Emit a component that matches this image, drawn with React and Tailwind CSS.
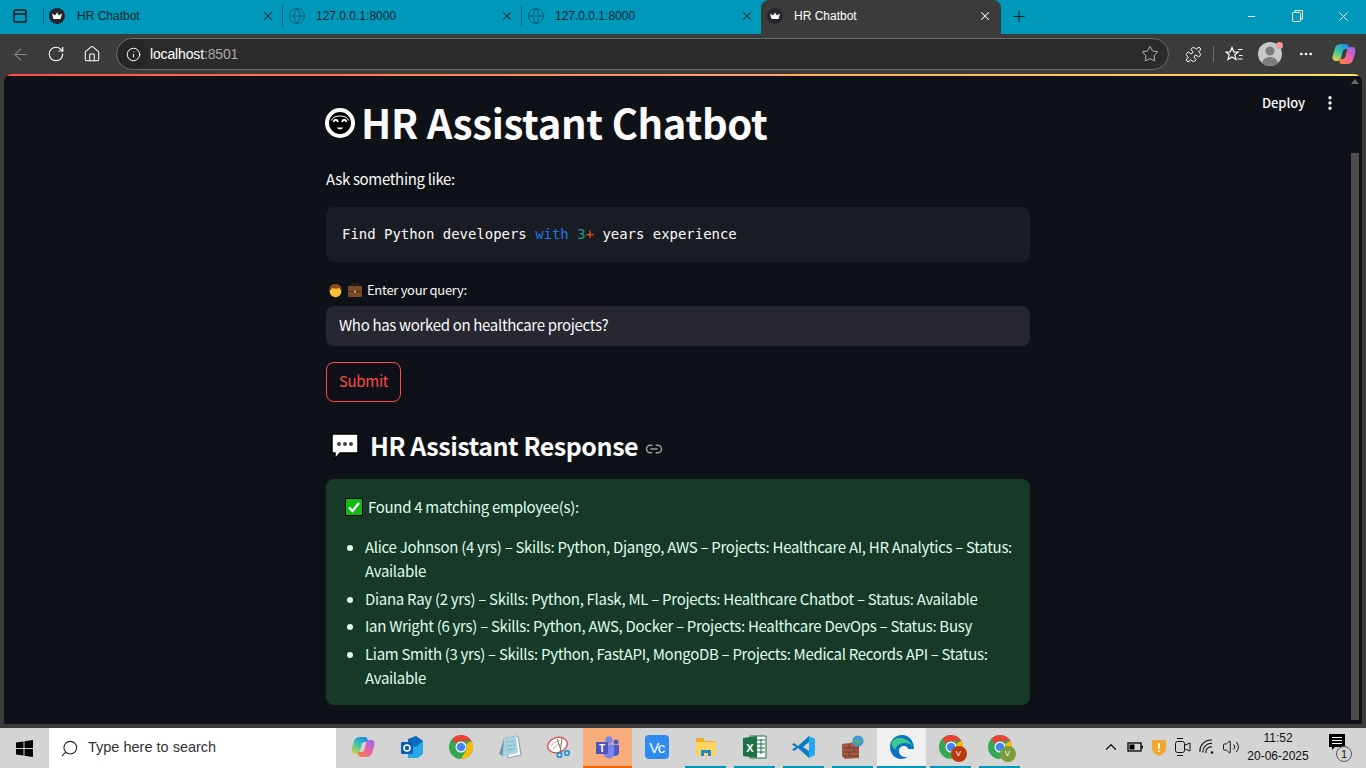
import React from "react";
import {
  ArrowLeft, RotateCw, Home, Info, Star, Puzzle, MoreHorizontal, MoreVertical, Plus, X, Minus,
  PanelTop, Globe, Search, ChevronUp, Link2, Volume2,
} from "lucide-react";

const SANS = "font-['Noto_Sans_CJK_SC','Source_Sans_Pro',sans-serif]";

// ── Small drawn icons ────────────────────────────────────────────────────────
function CrownFavicon() {
  return (
    <svg width="16" height="16" viewBox="0 0 16 16" className="shrink-0">
      <circle cx="8" cy="8" r="8" fill="#24262f" />
      <path d="M3 5.500 6 7.500 8 4.500 10 7.500 13 5.500 11.500 11h-7Z" fill="#fff" />
    </svg>
  );
}

function SmileEmoji() {
  return (
    <svg width="30" height="30" viewBox="0 0 30 30" className="shrink-0">
      <circle cx="15" cy="15" r="15" fill="#fff" />
      <circle cx="15" cy="15" r="11" fill="#000" />
      <path d="M6.500 12.500c1-6 16-6 17 0" fill="none" stroke="#fff" strokeWidth="1" />
      <path d="M8.500 14c.8-3 3.700-3 4.500 0M17 14c.8-3 3.700-3 4.500 0" stroke="#fff" strokeWidth="1.800" fill="none" />
      <path d="M12 19.500h6c-.5 2.500-5.500 2.500-6 0Z" fill="#fff" />
    </svg>
  );
}

function BoyEmoji() {
  return (
    <svg width="15" height="15" viewBox="0 0 15 15" className="shrink-0">
      <circle cx="7.500" cy="8.500" r="5.800" fill="#fbbf3c" />
      <path d="M1.500 8.500C.5 3 4 1 7.500 1s7 2 6 7.500c-1-2-2-3.500-3-3.500-2 1-4 1-6 0-1 1-2 2-3 3.500Z" fill="#8a4b1f" />
    </svg>
  );
}

function BriefcaseEmoji() {
  return (
    <svg width="16" height="15" viewBox="0 0 16 15" className="shrink-0">
      <rect x="5" y="1" width="6" height="3" fill="none" stroke="#3a2a1c" strokeWidth="1.200" />
      <rect x="1" y="3" width="14" height="11" rx="1" fill="#7b4a28" />
      <rect x="1" y="8" width="14" height="1" fill="#4d2e18" />
      <rect x="7" y="7.500" width="2" height="2" fill="#e5b23a" />
    </svg>
  );
}

function SpeechEmoji() {
  return (
    <svg width="30" height="28" viewBox="0 0 30 28" className="shrink-0">
      <path d="M2 1h26v19H10l-5 6v-6H2Z" fill="#fff" stroke="#000" strokeWidth="1.500" />
      <circle cx="9" cy="11" r="2" fill="#444" />
      <circle cx="15" cy="11" r="2" fill="#444" />
      <circle cx="21" cy="11" r="2" fill="#444" />
    </svg>
  );
}

function CheckEmoji() {
  return (
    <svg width="18" height="18" viewBox="0 0 18 18" className="shrink-0">
      <rect x="0.500" y="0.500" width="17" height="17" fill="#13b913" stroke="#000" />
      <path d="M4 9.500 7.500 13 14 5" stroke="#fff" strokeWidth="2.200" fill="none" />
    </svg>
  );
}

function CopilotIcon({ size = 24 }) {
  return (
    <svg width={size} height={size} viewBox="0 0 24 24">
      <defs>
        <linearGradient id="cpA" x1="0.700" y1="0" x2="0.100" y2="1">
          <stop offset="0" stopColor="#1f8fe8" />
          <stop offset="0.500" stopColor="#3fc9a0" />
          <stop offset="1" stopColor="#e6d23c" />
        </linearGradient>
        <linearGradient id="cpB" x1="0.900" y1="0" x2="0.200" y2="1">
          <stop offset="0" stopColor="#8f6be8" />
          <stop offset="0.500" stopColor="#e85fb0" />
          <stop offset="1" stopColor="#f5813c" />
        </linearGradient>
      </defs>
      <path d="M9 2h5c1 0 2 .5 2.500 2l1 3H14c-2 0-3 1-3.500 3L9 16c-.5 2-2 3-4 3H4c-2.500 0-4-2-3.500-4.500L3 6c.7-2.500 3-4 6-4Z" fill="url(#cpA)" />
      <path d="M15 22h-5c-1 0-2-.5-2.500-2l-1-3H10c2 0 3-1 3.500-3L15 8c.5-2 2-3 4-3h1c2.500 0 4 2 3.500 4.500L21 18c-.7 2.500-3 4-6 4Z" fill="url(#cpB)" />
    </svg>
  );
}

function ChromeIcon({ badge, badgeColor }) {
  return (
    <span className="relative flex h-6 w-6 items-center justify-center">
      <svg width="24" height="24" viewBox="0 0 24 24">
        <circle cx="12" cy="12" r="12" fill="#34a853" />
        <path d="M12 0a12 12 0 0 1 10.400 6H12a6 6 0 0 0-5.200 3L3.500 3.800A12 12 0 0 1 12 0Z" fill="#ea4335" />
        <path d="M22.400 6A12 12 0 0 1 12 24l5.200-9a6 6 0 0 0 0-6Z" fill="#fbbc05" />
        <circle cx="12" cy="12" r="5.500" fill="#fff" />
        <circle cx="12" cy="12" r="4.300" fill="#4285f4" />
      </svg>
      {badge && (
        <span
          className={`absolute -bottom-[3px] -right-[4px] flex h-[16px] w-[16px] items-center justify-center rounded-full text-[8px] text-white ${badgeColor}`}
        >
          {badge}
        </span>
      )}
    </span>
  );
}

// ── Browser chrome ───────────────────────────────────────────────────────────
function Tab({ favicon, title, last }) {
  return (
    <div
      className={`flex h-full w-[239px] shrink-0 items-center pl-[5px] pr-[7px] ${last ? "" : "border-r border-[#0b5f74]"}`}
    >
      <span className="flex w-[28px] items-center">{favicon}</span>
      <span className="flex-1 text-xs text-[#10242c]">{title}</span>
      <X size={14} strokeWidth={1.8} className="text-[#10242c]" />
    </div>
  );
}

function TabStrip() {
  const globe = <Globe size={18} strokeWidth={1.2} className="text-[#0a5a70]" />;
  return (
    <div className="flex h-[34px] shrink-0 items-center bg-[#0099bc] font-['Liberation_Sans',sans-serif]">
      <div className="mb-[2px] flex w-[44px] justify-center border-r border-[#0b5f74] pr-[4px]">
        <PanelTop size={16} strokeWidth={2} className="text-[#06141a]" />
      </div>
      <div className="mb-[2px] flex h-[22px] items-center">
        <Tab favicon={<CrownFavicon />} title="HR Chatbot" />
        <Tab favicon={globe} title="127.0.0.1:8000" />
        <Tab favicon={globe} title="127.0.0.1:8000" last />
      </div>
      <div className="flex h-[34px] w-[240px] shrink-0 items-center self-end rounded-t-lg bg-[#3b3b3b] pb-[2px] pl-[6px] pr-[9px]">
        <span className="flex w-[27px] items-center"><CrownFavicon /></span>
        <span className="flex-1 text-xs text-white">HR Chatbot</span>
        <X size={14} strokeWidth={1.8} className="text-white" />
      </div>
      <div className="mb-[2px] ml-[9px] flex w-[18px] justify-center">
        <Plus size={19} strokeWidth={1.3} className="text-[#06141a]" />
      </div>
      <div className="mb-[2px] ml-auto flex items-center text-white">
        <div className="flex w-[46px] justify-center"><Minus size={11} /></div>
        <div className="flex w-[46px] justify-center">
          <svg width="11" height="12" viewBox="0 0 11 12" fill="none" stroke="#fff">
            <rect x="0.500" y="2.500" width="8" height="9" rx="1" />
            <path d="M3 2.500V.5h7.500v8.500H8.500" />
          </svg>
        </div>
        <div className="flex w-[46px] justify-center"><X size={15} strokeWidth={1.4} /></div>
      </div>
    </div>
  );
}

function AddressBar() {
  return (
    <div className="flex h-[40px] shrink-0 items-center bg-[#3b3b3b] font-['Liberation_Sans',sans-serif]">
      <div className="flex w-[38px] justify-center pl-[3px]">
        <ArrowLeft size={19} strokeWidth={1.3} className="text-[#8d8d8d]" />
      </div>
      <div className="flex w-[36px] justify-center">
        <RotateCw size={18} strokeWidth={1.5} className="text-white" />
      </div>
      <div className="flex w-[36px] justify-center pr-[1px]">
        <Home size={18} strokeWidth={1.4} className="text-white" />
      </div>
      <div className="ml-[6px] flex h-[32px] w-[1053px] items-center rounded-full border border-[#6b6b6b] bg-[#2b2b2b]">
        <div className="ml-[1px] flex h-[30px] w-[30px] items-center justify-center rounded-full bg-[#262626]">
          <Info size={15} strokeWidth={1.6} className="text-white" />
        </div>
        <span className="ml-[2px] text-sm tracking-[-0.15px] text-white">
          localhost<span className="text-[#a8a8a8]">:8501</span>
        </span>
        <Star size={18} strokeWidth={1.2} className="ml-auto mr-[9px] text-[#c4c4c4]" />
      </div>
      <div className="ml-[8px] flex items-center">
        <div className="flex w-[32px] justify-center">
          <Puzzle size={17} strokeWidth={1.4} className="text-white" />
        </div>
        <span className="ml-[4px] h-[16px] w-px bg-[#6a6a6a]" />
        <div className="ml-[4px] flex w-[32px] justify-center">
          <svg width="18" height="17" viewBox="0 0 18 17" fill="none" stroke="#fff" strokeWidth="1.200">
            <path d="M7 1.500 8.800 6H13l-3.200 2.800 1.200 4.600L7 11l-4 2.400 1.200-4.600L1 6h4.200Z" />
            <path d="M13 3.500h4.500M14 9.500h3.500M12.500 13h5" />
          </svg>
        </div>
        <div className="ml-[4px] flex w-[32px] justify-center">
          <span className="relative flex h-[24px] w-[24px] items-center justify-center rounded-full bg-[#c9c9c9]">
            <svg width="24" height="24" viewBox="0 0 24 24" className="rounded-full">
              <circle cx="12" cy="9" r="4.500" fill="#7d7d7d" />
              <path d="M4 21c1-4 4-6 8-6s7 2 8 6c-2 2-5 3-8 3s-6-1-8-3Z" fill="#7d7d7d" />
            </svg>
            <span className="absolute -right-[1px] top-0 h-[7px] w-[7px] rounded-full bg-[#f59a9a]" />
          </span>
        </div>
        <div className="ml-[4px] flex w-[32px] justify-center">
          <MoreHorizontal size={16} className="text-white" />
        </div>
        <div className="ml-[6px] flex w-[32px] justify-center"><CopilotIcon /></div>
      </div>
    </div>
  );
}

// ── Streamlit page ───────────────────────────────────────────────────────────
const employees = [
  "Alice Johnson (4 yrs) – Skills: Python, Django, AWS – Projects: Healthcare AI, HR Analytics – Status: Available",
  "Diana Ray (2 yrs) – Skills: Python, Flask, ML – Projects: Healthcare Chatbot – Status: Available",
  "Ian Wright (6 yrs) – Skills: Python, AWS, Docker – Projects: Healthcare DevOps – Status: Busy",
  "Liam Smith (3 yrs) – Skills: Python, FastAPI, MongoDB – Projects: Medical Records API – Status: Available",
];

function StreamlitPage() {
  return (
    <div className={`relative h-[650px] shrink-0 overflow-hidden rounded-t-lg bg-[#0e1117] ${SANS}`}>
      <div className="h-[2px] bg-gradient-to-r from-[#ff4b4b] to-[#ffe168]" />

      {/* header overlay */}
      <div className="absolute right-[23px] top-[19px] flex items-center gap-[16px] text-[13px] font-medium tracking-[-0.1px] text-[#fafafa]">
        <span>Deploy</span>
        <MoreVertical size={18} strokeWidth={2.5} />
      </div>

      {/* scrollbar overlay */}
      <div className="absolute right-[1px] top-[2px] flex h-[648px] w-[12px] flex-col items-center">
        <span className="mt-[3px] h-0 w-0 border-x-[4px] border-b-[5px] border-x-transparent border-b-[#6b6b6b]" />
        <span className="mt-[69px] h-[567px] w-[8px] bg-[#4d4d4d]" />
      </div>

      <div className="ml-[322px] w-[704px] text-[#fafafa]">
        <div className="mt-[22px] flex h-[50px] items-center">
          <span className="-ml-[1px] flex"><SmileEmoji /></span>
          <h1 className="ml-[6px] pb-[2px] text-[40px] font-bold leading-[48px] tracking-[-0.32px]">
            HR Assistant Chatbot
          </h1>
        </div>

        <p className="mt-[19px] text-[15px] leading-[24px] tracking-[-0.32px]">Ask something like:</p>

        <div className="mt-[16px] flex h-[55px] items-center rounded-lg bg-[#1a1c24] pb-[2px] pl-[16px] font-['DejaVu_Sans_Mono',monospace] text-sm tracking-[-0.03px]">
          Find Python developers <span className="ml-[8.4px] text-[#1e78e6]">with</span>
          <span className="ml-[8.4px] text-[#1a9a8a]">3</span>
          <span className="text-[#e8590c]">+</span>
          <span className="ml-[8.4px]">years experience</span>
        </div>

        <div className="mt-[18px] flex h-[20px] items-center gap-[4px] pl-[2px] text-[13px] tracking-[-0.3px]">
          <BoyEmoji />
          <BriefcaseEmoji />
          <span>Enter your query:</span>
        </div>

        <div className="mt-[6px] flex h-[40px] items-center rounded-lg bg-[#262730] pb-[2px] pl-[13px] text-[15px] tracking-[-0.32px]">
          Who has worked on healthcare projects?
        </div>

        <button className="mt-[16px] flex h-[40px] w-[75px] items-center justify-center rounded-lg border border-[#ff4b4b] pb-[2px] text-[15px] tracking-[-0.32px] text-[#ff4b4b]">
          Submit
        </button>

        <div className="mt-[25px] flex h-[40px] items-center">
          <span className="ml-[4px] flex"><SpeechEmoji /></span>
          <h2 className="ml-[10px] pb-[4px] text-[25px] font-semibold leading-[36px] tracking-[-0.45px]">
            HR Assistant Response
          </h2>
          <Link2 size={18} strokeWidth={2} className="ml-[7px] mt-[3px] text-[#9a9a9a]" />
        </div>

        <div className="mt-[12px] h-[226px] rounded-lg bg-[#173928] px-[16px] pt-[16px] text-[15px] leading-[24px] tracking-[-0.3px] text-[#dffde9]">
          <div className="flex items-center gap-[5px] pl-[3px]">
            <CheckEmoji />
            <span>Found 4 matching employee(s):</span>
          </div>
          <ul className="mt-[16px] list-disc pl-[23px] marker:text-[#dffde9]">
            {employees.map((e) => (
              <li key={e} className="mb-[3.5px]">{e}</li>
            ))}
          </ul>
        </div>
      </div>
    </div>
  );
}

// ── Taskbar ──────────────────────────────────────────────────────────────────
function TaskItem({ children, state }) {
  const bg = { teams: "bg-[#f7ae7a]", active: "bg-[#f0f0f0]" }[state] || "";
  return (
    <div className={`relative flex h-full w-[49px] shrink-0 items-center justify-center pb-[2px] ${bg}`}>
      {children}
      {state === "teams" && <span className="absolute inset-x-0 bottom-0 h-[2px] bg-[#f0660a]" />}
      {state === "active" && <span className="absolute inset-x-0 bottom-0 h-[2px] bg-[#0099bc]" />}
      {state === "running" && <span className="absolute inset-x-[4px] bottom-0 h-[2px] bg-[#0099bc]" />}
    </div>
  );
}

function TrayCell({ children }) {
  return <div className="flex w-[24px] justify-center">{children}</div>;
}

function Taskbar() {
  return (
    <div className="flex h-[40px] shrink-0 items-stretch bg-[#d4d4d4] font-['Liberation_Sans',sans-serif] text-[#111]">
      <div className="flex w-[49px] items-center justify-center">
        <svg width="17" height="17" viewBox="0 0 17 17" fill="#000">
          <path d="M0 2.500 7.500 1.400V8H0ZM8.500 1.300 17 0v8H8.500ZM0 9h7.500v6.600L0 14.500ZM8.500 9H17v8l-8.500-1.300Z" />
        </svg>
      </div>
      <div className="flex w-[287px] items-center bg-white pl-[11px]">
        <Search size={19} strokeWidth={1.4} className="-scale-x-100 text-[#222]" />
        <span className="ml-[9px] text-[14.5px] text-[#333]">Type here to search</span>
      </div>
      <div className="ml-[2px] flex items-stretch">
        <TaskItem><CopilotIcon /></TaskItem>
        <TaskItem>
          <svg width="24" height="24" viewBox="0 0 24 24">
            <path d="M8 4 16 1l7 5v13l-5 4H8Z" fill="#28a8ea" />
            <path d="M8 4 16 1l7 5-7 6-8-2Z" fill="#0f6cbd" />
            <rect x="1" y="7" width="12" height="12" rx="1" fill="#0a5fb0" />
            <circle cx="7" cy="13" r="3" fill="none" stroke="#fff" strokeWidth="1.600" />
          </svg>
        </TaskItem>
        <TaskItem><ChromeIcon /></TaskItem>
        <TaskItem>
          <svg width="24" height="24" viewBox="0 0 24 24">
            <path d="M7 3 20 1l3 19-13 3Z" fill="#fff" stroke="#8f9a9e" />
            <path d="M6 3 18 1l2 17-15 3Z" fill="#a5d4e0" />
            <path d="M1 19 6 3l-1 18Z" fill="#6e97a8" />
            <path d="M8 7l8-1M8 11l9-1M8 15l9-1" stroke="#86b3c2" />
          </svg>
        </TaskItem>
        <TaskItem>
          <svg width="24" height="24" viewBox="0 0 24 24" fill="none">
            <ellipse cx="10.500" cy="10" rx="10" ry="7.500" transform="rotate(-20 10.500 10)" fill="#fff" stroke="#d94b4b" strokeWidth="1.300" />
            <path d="M4 11c3-4 6-5 9-5M6 14c2-3 5-5 8-5" stroke="#e99" />
            <path d="M10 4l5 14M15 3l-2 15" stroke="#777" />
            <circle cx="12.500" cy="20" r="2.300" stroke="#1a8fd1" strokeWidth="1.600" />
            <circle cx="20" cy="18" r="2.300" stroke="#1a8fd1" strokeWidth="1.600" />
          </svg>
        </TaskItem>
        <TaskItem state="teams">
          <svg width="25" height="24" viewBox="0 0 25 24">
            <circle cx="14" cy="5" r="3.700" fill="#7b83eb" />
            <circle cx="21" cy="7" r="2.500" fill="#5059c9" />
            <path d="M17 10h7v7c0 3-2 4-4 4s-3-1-3-3Z" fill="#5059c9" />
            <path d="M8 9.500h11v9c0 3-3 5-5 5s-5-2-6-5Z" fill="#7b83eb" />
            <rect x="1" y="7" width="12" height="12" rx="1" fill="#4b53bc" />
            <text x="7" y="16.500" textAnchor="middle" fontSize="10" fontWeight="700" fill="#fff" fontFamily="Liberation Sans">T</text>
          </svg>
        </TaskItem>
        <TaskItem>
          <span className="flex h-[24px] w-[24px] items-center justify-center rounded-[4px] bg-[#2f8bf0] text-[15px] leading-none tracking-[-1.5px] text-white">
            Vc
          </span>
        </TaskItem>
        <TaskItem state="running">
          <svg width="22" height="22" viewBox="0 0 22 22">
            <path d="M1 2h7l2 3h11v15H1Z" fill="#f0ad2e" />
            <rect x="1" y="6" width="20" height="14" fill="#fcd45f" />
            <path d="M6 20v-6h10v6h-3v-3H9v3Z" fill="#1d8ad4" />
          </svg>
        </TaskItem>
        <TaskItem state="running">
          <svg width="24" height="24" viewBox="0 0 24 24">
            <path d="M7 1h16v22H7Z" fill="#fff" stroke="#1e7145" />
            <path d="M14 5h8M14 9h8M14 13h8M14 17h8M18 4v15" stroke="#1e7145" />
            <path d="M0 3 14 1v22L0 21Z" fill="#1e7145" />
            <text x="7" y="16.500" textAnchor="middle" fontSize="11" fontWeight="700" fill="#fff" fontFamily="Liberation Sans">X</text>
          </svg>
        </TaskItem>
        <TaskItem state="running">
          <svg width="24" height="24" viewBox="0 0 24 24">
            <path d="M17 1 6 11 2 8 0 9.500 4 12l-4 2.500L2 16l4-3 11 10V16l-6-4 6-5Z" fill="#0a7cc4" />
            <path d="M17 1 23 4v16l-6 3Z" fill="#22a7f0" />
          </svg>
        </TaskItem>
        <TaskItem state="running">
          <svg width="24" height="24" viewBox="0 0 24 24">
            <path d="M1 9l14-2 3 3v13l-14 1-3-3Z" fill="#a65a42" />
            <path d="M2 13h16M2 17h16M2 21h16M8 9v4M13 13v4M8 17v4" stroke="#6f3a2b" />
            <circle cx="17" cy="6" r="5.500" fill="#3c9bd6" />
            <path d="M13 4c3 2 5 0 7 2-1 3-3 3-5 2Z" fill="#5fb256" />
          </svg>
        </TaskItem>
        <TaskItem state="active">
          <svg width="24" height="24" viewBox="0 0 24 24">
            <path d="M12 0C5 0 0 5 0 12c0 7 5 12 11 12 3 0 5-1 7-2-5 1-9-2-9-6 0-3 2-5 5-5 3 0 4 2 4 3h6C24 6 19 0 12 0Z" fill="#0c72c4" />
            <path d="M2 7c3-5 9-5 13-3 5 2 8 7 9 10 0-2-3-6-9-6-5 0-9 3-10 7C3 12 1 10 2 7Z" fill="#3ac98b" />
          </svg>
        </TaskItem>
        <TaskItem state="running"><ChromeIcon badge="V" badgeColor="bg-[#b8380f]" /></TaskItem>
        <TaskItem state="running"><ChromeIcon badge="V" badgeColor="bg-[#7a9c3a]" /></TaskItem>
      </div>

      <div className="ml-auto flex items-center pb-[2px]">
        <TrayCell><ChevronUp size={18} strokeWidth={1.6} /></TrayCell>
        <TrayCell>
          <svg width="16" height="12" viewBox="0 0 16 12">
            <rect x="1" y="2" width="13" height="8" fill="none" stroke="#000" strokeWidth="1.300" />
            <rect x="2.500" y="3.500" width="5" height="5" fill="#000" />
            <rect x="14.500" y="4.500" width="1.500" height="3" fill="#000" />
          </svg>
        </TrayCell>
        <TrayCell>
          <svg width="14" height="17" viewBox="0 0 14 17">
            <path d="M0 1h14v8c0 4-3 6-7 8-4-2-7-4-7-8Z" fill="#f0a830" />
            <rect x="6.200" y="4" width="1.600" height="6" fill="#fff" />
            <rect x="6.200" y="11.500" width="1.600" height="1.600" fill="#fff" />
          </svg>
        </TrayCell>
        <TrayCell>
          <svg width="18" height="20" viewBox="0 0 18 20" fill="none" stroke="#111">
            <rect x="1.500" y="4.500" width="9" height="11" rx="2" />
            <path d="M3 1.500h6M3 18.500h6M11 8l5-2v8l-5-2" />
          </svg>
        </TrayCell>
        <TrayCell>
          <svg width="16" height="16" viewBox="0 0 16 16" fill="none" stroke="#111" strokeWidth="1.100">
            <path d="M1 13a11 11 0 0 1 12-12M4 13.500a8 8 0 0 1 9-9M7 14a5 5 0 0 1 6-6" />
            <circle cx="13" cy="13.500" r="1.300" fill="#111" stroke="none" />
          </svg>
        </TrayCell>
        <TrayCell><Volume2 size={18} strokeWidth={1.3} /></TrayCell>
        <div className="flex w-[70px] flex-col items-center whitespace-nowrap text-xs leading-[18px] text-[#111]">
          <span>11:52</span>
          <span>20-06-2025</span>
        </div>
        <div className="relative ml-[8px] mr-[13px] flex h-[26px] w-[32px] justify-center">
          <svg width="16" height="16" viewBox="0 0 16 16">
            <path d="M0 0h16v13H6l-3 3v-3H0Z" fill="#000" />
            <path d="M3 3.500h10M3 6.500h10M3 9.500h10" stroke="#fff" />
          </svg>
          <span className="absolute bottom-[-2px] right-[1px] flex h-[16px] w-[16px] items-center justify-center rounded-full border border-[#555] bg-[#d4d4d4] text-[11px] leading-none">
            1
          </span>
        </div>
      </div>
    </div>
  );
}

export default function App() {
  return (
    <div className="flex h-[768px] w-[1366px] flex-col overflow-hidden bg-[#3b3b3b]">
      <TabStrip />
      <AddressBar />
      <div className="mx-[4px] flex flex-col">
        <StreamlitPage />
      </div>
      <div className="h-[4px] shrink-0" />
      <Taskbar />
    </div>
  );
}
